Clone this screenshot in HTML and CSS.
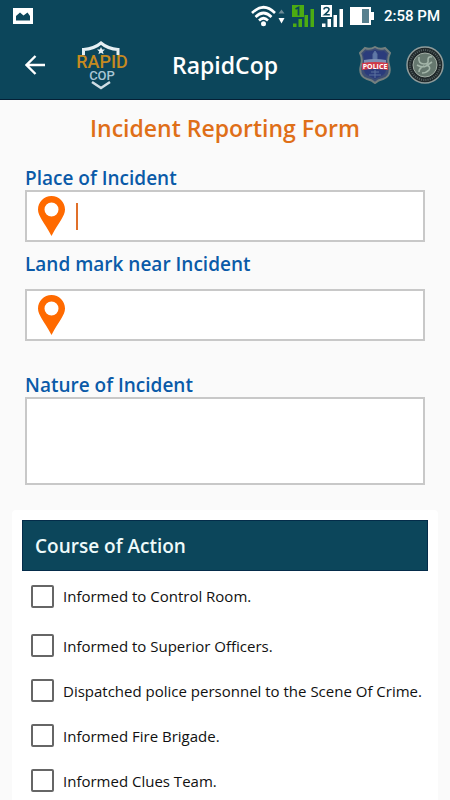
FILE: index.html
```html
<!DOCTYPE html>
<html lang="en">
<head>
  <meta charset="UTF-8">
  <meta name="viewport" content="width=device-width, initial-scale=1.0">
  <title>RapidCop</title>
  <link rel="stylesheet" href="styles.css">
</head>
<body>
<div class="status-bar">
  <svg class="status-picture" width="20" height="16" viewBox="0 0 20 16" aria-hidden="true">
    <path fill="#fff" fill-rule="evenodd" d="M0 0h20v16H0zM3 12.500h14V8l-2.500-3.500-4 3L7 4.500 3 8z"/>
  </svg>
  <div class="status-icons">
    <svg width="34" height="22" viewBox="0 0 34 22" aria-hidden="true">
      <g fill="none" stroke="#fff" stroke-width="2.600">
        <path d="M1 8Q12.500-3.500 24 8"/>
        <path d="M4.500 12Q12.500 4 20.500 12"/>
        <path d="M8 15.500Q12.500 11 17 15.500"/>
      </g>
      <circle cx="12.500" cy="18.800" r="2.500" fill="#fff"/>
      <path d="M27.500 8.500l3-4 3 4z" fill="#6f8c98"/>
      <path d="M27.500 13h6l-3 5.500z" fill="#fff"/>
    </svg>
    <svg width="22" height="22" viewBox="0 0 22 22" aria-hidden="true">
      <rect width="12" height="12" fill="#4cac12"/>
      <path d="M3.500 4L6.500 2.500V10.500" fill="none" stroke="#0c465b" stroke-width="1.800"/>
      <path d="M1 18.500h3.500V22H1zM6.500 14h3.500v8H6.500zM12.500 10H16v12h-3.500zM18.500 4H22v18h-3.500z" fill="#4cac12"/>
    </svg>
    <svg width="22" height="22" viewBox="0 0 22 22" aria-hidden="true">
      <rect width="11" height="12" fill="#fff"/>
      <path d="M3 4.500Q3 2.500 5.500 2.500T8 4.500Q8 6 3.500 9.800H8.800" fill="none" stroke="#0c465b" stroke-width="1.600"/>
      <path d="M1 18.500h3.500V22H1zM6.500 14h3.500v8H6.500zM12.500 10H16v12h-3.500zM18.500 4H22v18h-3.500z" fill="#fff"/>
    </svg>
    <svg width="24" height="18" viewBox="0 0 24 18" aria-hidden="true">
      <path d="M0 0h21v5h3v8h-3v5H0z" fill="#fff"/>
      <path d="M12 2h7v14h-7z" fill="#58808e"/>
    </svg>
  </div>
  <span class="clock">2:58 PM</span>
</div>

<header class="app-bar">
  <button class="back-btn" type="button" aria-label="Back">
    <svg width="20" height="20" viewBox="0 0 20 20" aria-hidden="true">
      <path d="M20 10H2M10.500 1L1.500 10l9 9" fill="none" stroke="#fff" stroke-width="2.400"/>
    </svg>
  </button>
  <svg class="logo" width="52" height="50" viewBox="0 0 52 50" role="img" aria-label="Rapid Cop">
    <path d="M7.500 15V9.500Q18 9 25 3q7 6 17 6.500V15" fill="none" stroke="#e6eff3" stroke-width="3"/>
    <path d="M16 42l9 6 9-6" fill="none" stroke="#cfdde4" stroke-width="2.500"/>
    <path d="M25 7l1.200 2.500h2.800l-2.200 1.900.8 2.900-2.600-1.600-2.600 1.600.8-2.900L21 9.500h2.800z" fill="#e6eff3"/>
    <text class="logo-rapid" x="26" y="28" text-anchor="middle">RAPID</text>
    <text class="logo-cop" x="26" y="40" text-anchor="middle">COP</text>
  </svg>
  <h1>RapidCop</h1>
  <div class="badges">
    <svg width="32" height="38" viewBox="0 0 32 38" role="img" aria-label="Police">
      <path d="M6 2q5 2 10-1 5 3 10 1l5 5q-3 6-1 12 3 11-6 14-5 1-8 4-3-3-8-4-9-3-6-14 2-6-1-12z" fill="#3c4d75" stroke="#74807f" stroke-width="2"/>
      <path d="M7 5q4 1 9-1 5 2 9 1l3 3q-2 6-1 12 1 8-5 10l-6 3-6-3q-6-2-5-10 1-6-1-12z" fill="#2b3c7c"/>
      <path d="M14 14V8l2-3 2 3v6zM10 29h12M12 26h8M16 24v8" fill="#5f78a8" stroke="#5c739e"/>
      <path d="M5 14q11-2 22 0v3H5z" fill="#7f90b4"/>
      <path d="M3 17q13-2 26 0v7q-13-2-26 0z" fill="#cf3949"/>
      <text class="badge-text" x="16" y="23" text-anchor="middle">POLICE</text>
    </svg>
    <svg width="38" height="38" viewBox="0 0 38 38" aria-hidden="true">
      <circle cx="19" cy="19" r="18" fill="#20282a" stroke="#8f9c9b" stroke-width="1.500"/>
      <circle cx="19" cy="19" r="15" fill="none" stroke="#566263" stroke-width="2" stroke-dasharray="1 1.200"/>
      <circle cx="19" cy="19" r="12" fill="#66786f" stroke="#a3aea6"/>
      <path d="M13 11q-1 7 5 7 5 0 4-4 0-4 4-3M11 19q5 3 9 1l6-4M18 20q-5 2-5 6M21 19q4 2 2 5-3 3-7 3" fill="none" stroke="#a3b5a9" stroke-width="1.600"/>
    </svg>
  </div>
</header>

<main>
  <form>
    <h2>Incident Reporting Form</h2>
    <div class="field">
      <label for="place">Place of Incident</label>
      <div class="input-box">
        <svg width="27" height="40" viewBox="0 0 27 40" aria-hidden="true">
          <path fill="#ff6a00" fill-rule="evenodd" d="M13.500 0C6 0 0 6 0 13.500 0 20 6 26 13.500 40 21 26 27 20 27 13.500 27 6 21 0 13.500 0zm0 6.500a7 7 0 1 1 0 14 7 7 0 0 1 0-14z"/>
        </svg>
        <span class="caret"></span>
        <input type="text" id="place">
      </div>
    </div>
    <div class="field spaced">
      <label for="landmark">Land mark near Incident</label>
      <div class="input-box">
        <svg width="27" height="40" viewBox="0 0 27 40" aria-hidden="true">
          <path fill="#ff6a00" fill-rule="evenodd" d="M13.500 0C6 0 0 6 0 13.500 0 20 6 26 13.500 40 21 26 27 20 27 13.500 27 6 21 0 13.500 0zm0 6.500a7 7 0 1 1 0 14 7 7 0 0 1 0-14z"/>
        </svg>
        <input type="text" id="landmark">
      </div>
    </div>
    <div class="field">
      <label for="nature">Nature of Incident</label>
      <textarea id="nature"></textarea>
    </div>

    <section class="actions">
      <h3>Course of Action</h3>
      <label class="check first"><input type="checkbox"> Informed to Control Room.</label>
      <label class="check"><input type="checkbox"> Informed to Superior Officers.</label>
      <label class="check"><input type="checkbox"> Dispatched police personnel to the Scene Of Crime.</label>
      <label class="check"><input type="checkbox"> Informed Fire Brigade.</label>
      <label class="check"><input type="checkbox"> Informed Clues Team.</label>
    </section>
  </form>
</main>
</body>
</html>
```

FILE: styles.css
```css
* {
    box-sizing: border-box;
}

body {
    margin: 0;
    font-family: 'Open Sans', 'Noto Sans', sans-serif;
    background: #fafafa;
    color: #111;
}

svg {
    display: block;
    flex-shrink: 0;
}

.status-bar {
    display: flex;
    align-items: center;
    height: 32px;
    padding: 0 10px 0 13px;
    background: #0c465b;
    color: #fff;
}

.status-icons {
    display: flex;
    align-items: center;
    gap: 7px;
    margin-left: auto;
}

.clock {
    margin-left: 10px;
    font-family: Roboto, sans-serif;
    font-size: 15px;
    font-weight: 500;
}

.app-bar {
    display: flex;
    align-items: center;
    height: 68px;
    padding: 0 6px 2px 25px;
    background: #0c465b;
    border-bottom: 1px solid #042036;
    color: #fff;
}

.back-btn {
    padding: 0;
    border: 0;
    background: none;
}

.logo {
    margin-left: 31px;
}

.logo-rapid {
    font: 500 18px Roboto, sans-serif;
    fill: #c68a20;
}

.logo-cop {
    font: 500 13px Roboto, sans-serif;
    fill: #a9c5d4;
}

h1 {
    margin: 0 0 0 44px;
    font-size: 23px;
    font-weight: 600;
}

.badges {
    display: flex;
    align-items: center;
    gap: 15px;
    margin-left: auto;
}

.badge-text {
    font: 700 7px 'Open Sans', sans-serif;
    fill: #fff;
}

h2 {
    margin: 0 0 22px;
    padding-top: 12px;
    font-size: 23px;
    font-weight: 600;
    line-height: 32px;
    text-align: center;
    color: #df6f18;
}

.field {
    display: flex;
    flex-direction: column;
    margin: 0 25px 10px;
}

.field label {
    font-size: 19px;
    font-weight: 600;
    line-height: 24px;
    color: #0a5aa8;
}

.input-box {
    display: flex;
    align-items: center;
    height: 52px;
    padding: 0 11px;
    background: #fff;
    border: 2px solid #c8c8c8;
}

.caret {
    width: 2px;
    height: 27px;
    margin-left: 11px;
    background: #e0702a;
}

.input-box input {
    flex: 1;
    min-width: 0;
    height: 100%;
    border: 0;
    outline: none;
    background: none;
    font: inherit;
}

.spaced {
    gap: 13px;
    margin-bottom: 32px;
}

textarea {
    height: 88px;
    padding: 8px;
    border: 2px solid #c8c8c8;
    border-radius: 0;
    outline: none;
    resize: none;
    background: #fff;
    font: inherit;
}

.actions {
    margin: 25px 12px 0;
    padding: 10px;
    background: #fff;
    border-radius: 4px;
}

h3 {
    margin: 0;
    padding: 1px 12px 0;
    background: #0c465b;
    border: 1px solid #042c4a;
    font-size: 19px;
    font-weight: 600;
    line-height: 48px;
    color: #eefafa;
}

.check {
    display: flex;
    align-items: center;
    gap: 9px;
    height: 45px;
    padding-left: 9px;
    font-size: 15px;
}

.first {
    height: 50px;
    margin-bottom: 2px;
}

.check input {
    appearance: none;
    flex-shrink: 0;
    width: 23px;
    height: 23px;
    margin: 0;
    border: 2px solid #666;
    border-radius: 2px;
    background: #fff;
}

.check input:checked {
    background: #0c465b;
}
```
